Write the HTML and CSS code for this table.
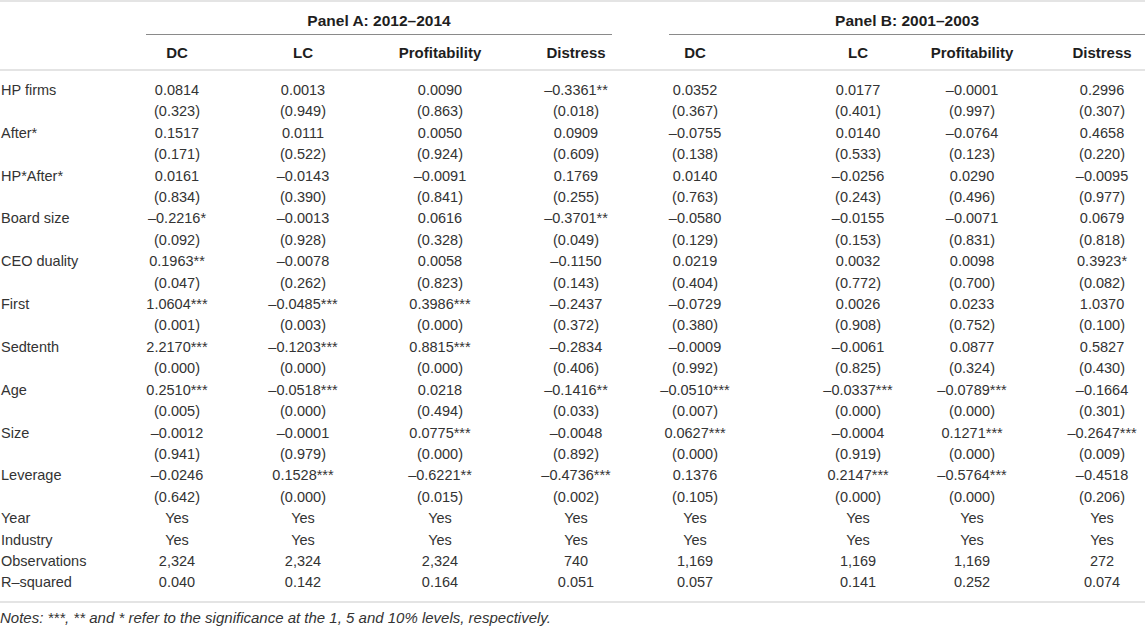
FILE: index.html
```html
<!DOCTYPE html>
<html lang="en">
<head>
    <meta charset="UTF-8">
    <title>Panel regressions</title>
    <link rel="stylesheet" href="styles.css">
</head>
<body>
    <table class="results">
        <colgroup>
            <col class="c-label">
            <col class="c-a1"><col class="c-a2"><col class="c-a3"><col class="c-a4">
            <col class="c-b1"><col class="c-b2"><col class="c-b3"><col class="c-b4">
        </colgroup>
        <thead>
            <tr class="panels">
                <th></th>
                <th colspan="4" class="panel-a"><div class="panel-title">Panel A: 2012–2014</div></th>
                <th colspan="4" class="panel-b"><div class="panel-title">Panel B: 2001–2003</div></th>
            </tr>
            <tr class="heads">
                <th></th>
                <th>DC</th><th>LC</th><th>Profitability</th><th>Distress</th>
                <th>DC</th><th>LC</th><th>Profitability</th><th>Distress</th>
            </tr>
        </thead>
        <tbody>
            <tr><td>HP firms</td><td>0.0814</td><td>0.0013</td><td>0.0090</td><td>–0.3361**</td><td>0.0352</td><td>0.0177</td><td>–0.0001</td><td>0.2996</td></tr>
            <tr><td></td><td>(0.323)</td><td>(0.949)</td><td>(0.863)</td><td>(0.018)</td><td>(0.367)</td><td>(0.401)</td><td>(0.997)</td><td>(0.307)</td></tr>
            <tr><td>After*</td><td>0.1517</td><td>0.0111</td><td>0.0050</td><td>0.0909</td><td>–0.0755</td><td>0.0140</td><td>–0.0764</td><td>0.4658</td></tr>
            <tr><td></td><td>(0.171)</td><td>(0.522)</td><td>(0.924)</td><td>(0.609)</td><td>(0.138)</td><td>(0.533)</td><td>(0.123)</td><td>(0.220)</td></tr>
            <tr><td>HP*After*</td><td>0.0161</td><td>–0.0143</td><td>–0.0091</td><td>0.1769</td><td>0.0140</td><td>–0.0256</td><td>0.0290</td><td>–0.0095</td></tr>
            <tr><td></td><td>(0.834)</td><td>(0.390)</td><td>(0.841)</td><td>(0.255)</td><td>(0.763)</td><td>(0.243)</td><td>(0.496)</td><td>(0.977)</td></tr>
            <tr><td>Board size</td><td>–0.2216*</td><td>–0.0013</td><td>0.0616</td><td>–0.3701**</td><td>–0.0580</td><td>–0.0155</td><td>–0.0071</td><td>0.0679</td></tr>
            <tr><td></td><td>(0.092)</td><td>(0.928)</td><td>(0.328)</td><td>(0.049)</td><td>(0.129)</td><td>(0.153)</td><td>(0.831)</td><td>(0.818)</td></tr>
            <tr><td>CEO duality</td><td>0.1963**</td><td>–0.0078</td><td>0.0058</td><td>–0.1150</td><td>0.0219</td><td>0.0032</td><td>0.0098</td><td>0.3923*</td></tr>
            <tr><td></td><td>(0.047)</td><td>(0.262)</td><td>(0.823)</td><td>(0.143)</td><td>(0.404)</td><td>(0.772)</td><td>(0.700)</td><td>(0.082)</td></tr>
            <tr><td>First</td><td>1.0604***</td><td>–0.0485***</td><td>0.3986***</td><td>–0.2437</td><td>–0.0729</td><td>0.0026</td><td>0.0233</td><td>1.0370</td></tr>
            <tr><td></td><td>(0.001)</td><td>(0.003)</td><td>(0.000)</td><td>(0.372)</td><td>(0.380)</td><td>(0.908)</td><td>(0.752)</td><td>(0.100)</td></tr>
            <tr><td>Sedtenth</td><td>2.2170***</td><td>–0.1203***</td><td>0.8815***</td><td>–0.2834</td><td>–0.0009</td><td>–0.0061</td><td>0.0877</td><td>0.5827</td></tr>
            <tr><td></td><td>(0.000)</td><td>(0.000)</td><td>(0.000)</td><td>(0.406)</td><td>(0.992)</td><td>(0.825)</td><td>(0.324)</td><td>(0.430)</td></tr>
            <tr><td>Age</td><td>0.2510***</td><td>–0.0518***</td><td>0.0218</td><td>–0.1416**</td><td>–0.0510***</td><td>–0.0337***</td><td>–0.0789***</td><td>–0.1664</td></tr>
            <tr><td></td><td>(0.005)</td><td>(0.000)</td><td>(0.494)</td><td>(0.033)</td><td>(0.007)</td><td>(0.000)</td><td>(0.000)</td><td>(0.301)</td></tr>
            <tr><td>Size</td><td>–0.0012</td><td>–0.0001</td><td>0.0775***</td><td>–0.0048</td><td>0.0627***</td><td>–0.0004</td><td>0.1271***</td><td>–0.2647***</td></tr>
            <tr><td></td><td>(0.941)</td><td>(0.979)</td><td>(0.000)</td><td>(0.892)</td><td>(0.000)</td><td>(0.919)</td><td>(0.000)</td><td>(0.009)</td></tr>
            <tr><td>Leverage</td><td>–0.0246</td><td>0.1528***</td><td>–0.6221**</td><td>–0.4736***</td><td>0.1376</td><td>0.2147***</td><td>–0.5764***</td><td>–0.4518</td></tr>
            <tr><td></td><td>(0.642)</td><td>(0.000)</td><td>(0.015)</td><td>(0.002)</td><td>(0.105)</td><td>(0.000)</td><td>(0.000)</td><td>(0.206)</td></tr>
            <tr><td>Year</td><td>Yes</td><td>Yes</td><td>Yes</td><td>Yes</td><td>Yes</td><td>Yes</td><td>Yes</td><td>Yes</td></tr>
            <tr><td>Industry</td><td>Yes</td><td>Yes</td><td>Yes</td><td>Yes</td><td>Yes</td><td>Yes</td><td>Yes</td><td>Yes</td></tr>
            <tr><td>Observations</td><td>2,324</td><td>2,324</td><td>2,324</td><td>740</td><td>1,169</td><td>1,169</td><td>1,169</td><td>272</td></tr>
            <tr><td>R–squared</td><td>0.040</td><td>0.142</td><td>0.164</td><td>0.051</td><td>0.057</td><td>0.141</td><td>0.252</td><td>0.074</td></tr>
        </tbody>
    </table>
    <p class="notes">Notes: ***, ** and * refer to the significance at the 1, 5 and 10% levels, respectively.</p>
</body>
</html>
```

FILE: styles.css
```css
body {
    margin: 0;
    background: #ffffff;
    font-family: 'Liberation Sans', Arial, sans-serif;
    color: #333333;
}
.results {
    width: 1145px;
    table-layout: fixed;
    border-collapse: separate;
    border-spacing: 0;
    border-top: 2px solid #e4e4e4;
}
.c-label { width: 120px; }
.c-a1 { width: 120px; }
.c-a2 { width: 132px; }
.c-a3 { width: 136px; }
.c-a4 { width: 128px; }
.c-b1 { width: 140px; }
.c-b2 { width: 139px; }
.c-b3 { width: 122px; }
.c-b4 { width: 108px; }

.results th,
.results td {
    padding: 0;
    text-align: center;
    white-space: nowrap;
}
.results th {
    font-size: 15px;
    font-weight: bold;
    color: #1e1e1e;
    line-height: 21px;
}
.results td {
    font-size: 14.5px;
    line-height: 21.4px;
}
.results td:first-child {
    text-align: left;
    padding-left: 1px;
}

/* shift each column so the figures sit where the original has them */
.results tr > :nth-child(2) { padding-right: 6px; }
.results tr > :nth-child(3) { padding-right: 6px; }
.results tr > :nth-child(5) { padding-left: 8px; }
.results tr > :nth-child(6) { padding-right: 22px; }
.results tr > :nth-child(7) { padding-left: 25px; }
.results tr > :nth-child(8) { padding-right: 8px; }
.results tr > :nth-child(9) { padding-left: 22px; }

.results .panels th.panel-a { padding: 0 24px 0 26px; }
.results .panels th.panel-b { padding: 0 0 0 33px; }
.panel-title {
    padding: 8px 0 3px;
    font-size: 15.5px;
    border-bottom: 1px solid #8a8a8a;
}
.heads th {
    padding-top: 7px;
    padding-bottom: 6px;
    border-bottom: 2px solid #e4e4e4;
}
.results tbody tr:first-child td { padding-top: 9px; }
.results tbody tr:last-child td {
    padding-bottom: 7px;
    border-bottom: 2px solid #e4e4e4;
}
.notes {
    margin: 6px 0 0;
    font-size: 15px;
    font-style: italic;
    line-height: 17px;
    color: #333333;
}
```
